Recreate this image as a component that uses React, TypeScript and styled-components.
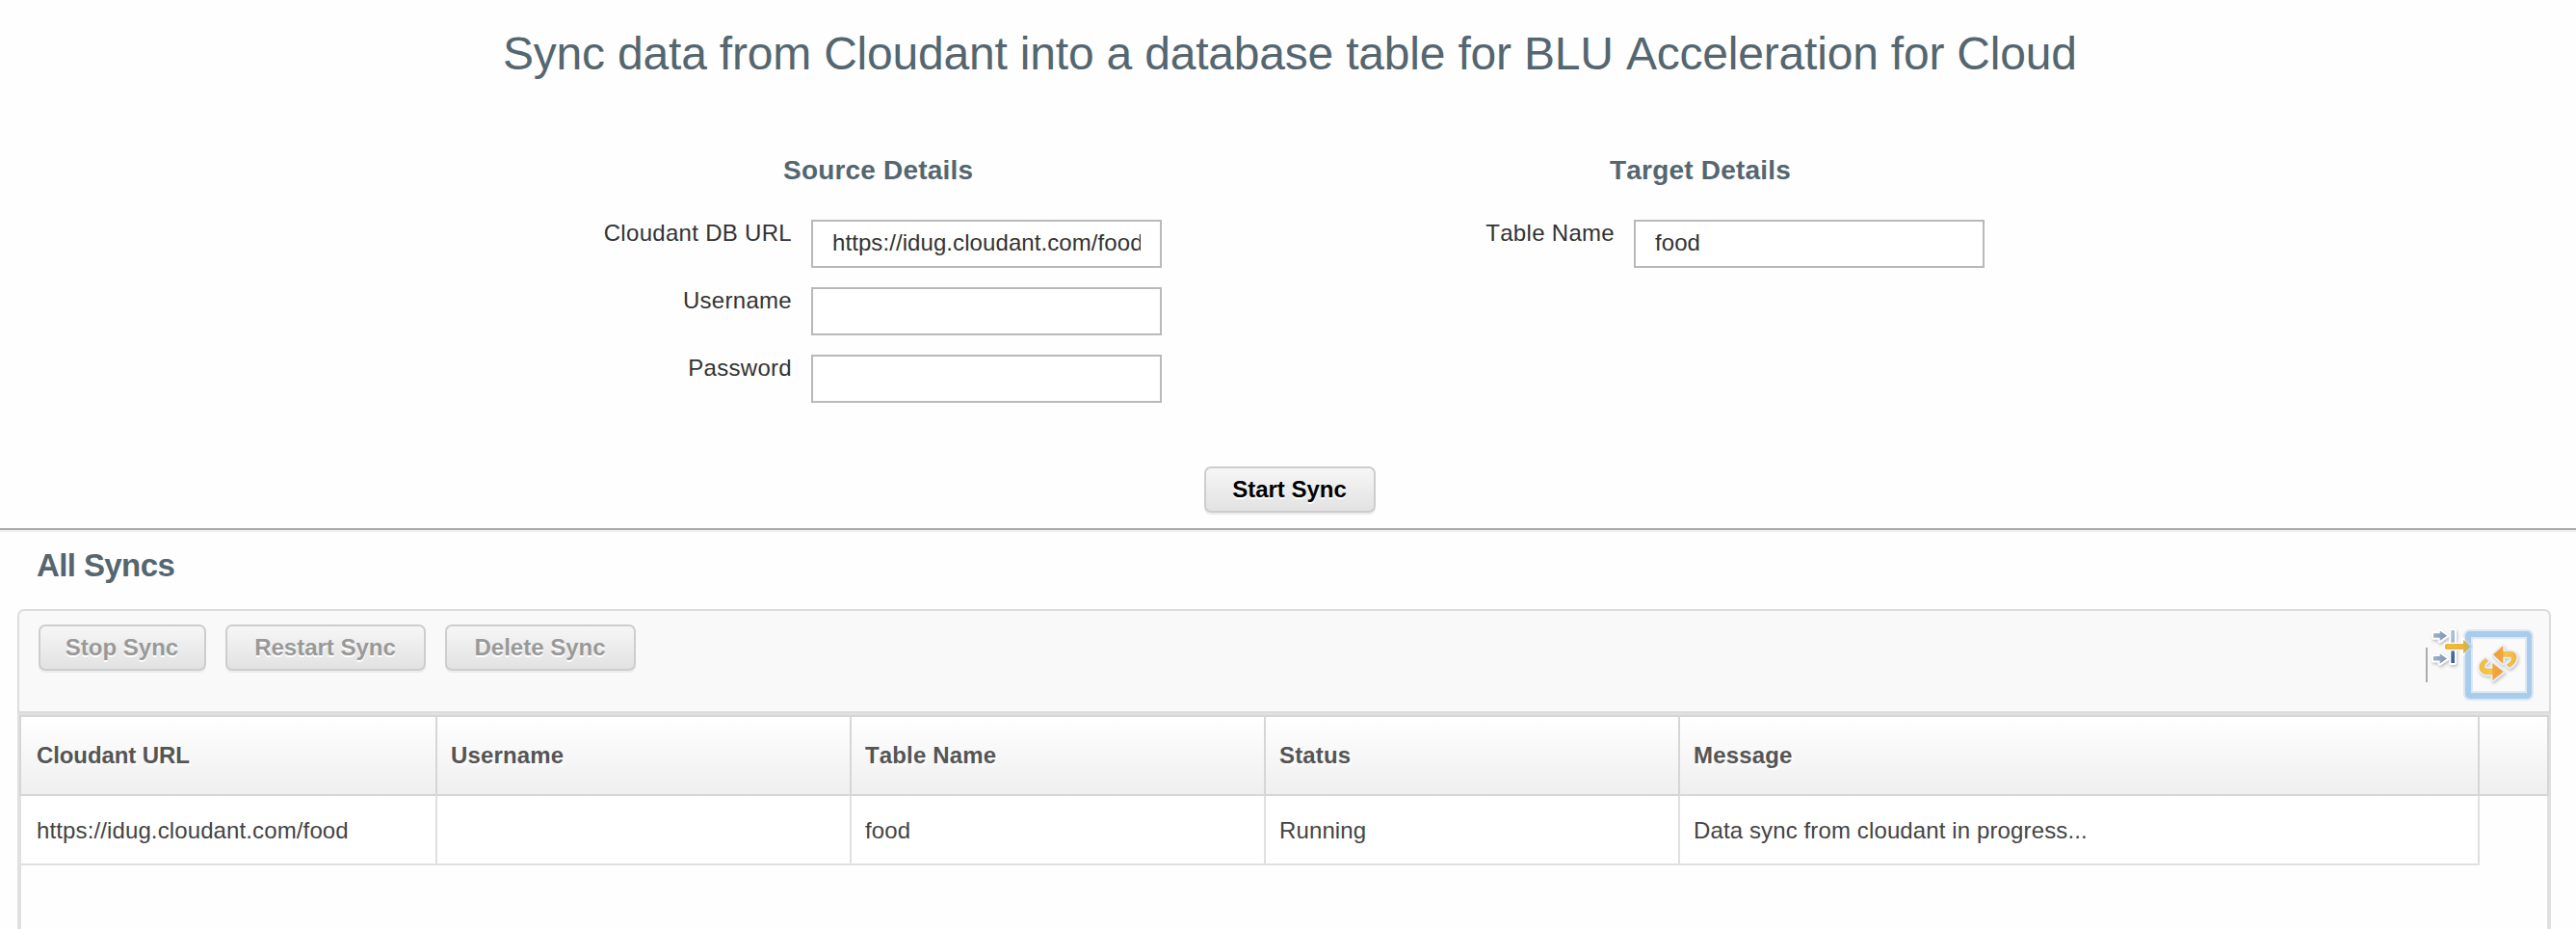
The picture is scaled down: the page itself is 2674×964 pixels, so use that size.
import React from "react";
import styled, { createGlobalStyle, css } from "styled-components";

const Global = createGlobalStyle`
  html, body { margin: 0; background: #fefefe; overflow: hidden; }
  * { box-sizing: border-box; }
  body { font-family: "Liberation Sans", Arial, sans-serif; font-size: 24px; color: #333; font-kerning: none; }
`;

const Page = styled.div`
  width: 2674px;
  height: 964px;
  overflow: hidden;
  display: flex;
  flex-direction: column;
`;

const Setup = styled.section`
  height: 552px;
  flex: none;
  border-bottom: 2px solid #efefef;
  display: flex;
  flex-direction: column;
  box-shadow: inset 0 -2px 0 #ababab;
`;

const Title = styled.h1`
  margin: 28px 0 0 522px;
  font-size: 48px;
  line-height: 56px;
  font-weight: 400;
  letter-spacing: -0.2px;
  color: #54666f;
  white-space: nowrap;
`;

const Forms = styled.div`
  display: flex;
  margin-top: 76px;
  height: 324px;
`;

const Group = styled.div<{ $labelWidth: number }>`
  display: grid;
  grid-template-columns: ${(p) => p.$labelWidth}px 364px;
  grid-template-rows: 68px;
  grid-auto-rows: 70px;
  column-gap: 20px;
  align-content: start;
`;

const GroupTitle = styled.h2<{ $indent: number }>`
  grid-column: 1 / -1;
  margin: 0;
  padding: 1px 0 0 ${(p) => p.$indent}px;
  font-size: 28px;
  line-height: 32px;
  letter-spacing: 0.2px;
  color: #54666f;
  white-space: nowrap;
`;

const Label = styled.label`
  text-align: right;
  line-height: 28px;
  letter-spacing: 0.3px;
  white-space: nowrap;
`;

const Field = styled.input`
  width: 364px;
  height: 50px;
  padding: 0 20px 2px;
  border: 2px solid #b9b9b9;
  background: #fff;
  font: inherit;
  letter-spacing: 0.08px;
  color: inherit;
  outline: none;
`;

const Button = styled.button<{ $width: number; $muted?: boolean }>`
  width: ${(p) => p.$width}px;
  height: 48px;
  flex: none;
  padding: 0 1px 0 0;
  border: 2px solid #cdcdcd;
  border-radius: 7px;
  background: linear-gradient(#f6f6f6, #e2e2e2);
  box-shadow: 0 2px 0 #ebebeb;
  font: bold 24px "Liberation Sans", Arial, sans-serif;
  line-height: 42px;
  white-space: nowrap;
  text-shadow: 0 2px 0 #fff;
  color: ${(p) => (p.$muted ? "#999" : "#000")};
`;

const StartRow = styled.div`
  display: flex;
  padding-left: 1250px;
`;

const ListTitle = styled.h2`
  margin: 16px 0 0 38px;
  font-size: 33px;
  line-height: 38px;
  letter-spacing: -0.6px;
  color: #54666f;
`;

const Panel = styled.section`
  margin: 26px 0 0 18px;
  width: 2630px;
  flex: 1;
  display: flex;
  flex-direction: column;
`;

const Toolbar = styled.div`
  height: 108px;
  flex: none;
  display: flex;
  align-items: flex-start;
  gap: 20px;
  padding: 14px 18px 0 20px;
  border: 2px solid #dcdcdc;
  border-radius: 7px 7px 0 0;
  background: #f9f9f9;
`;

const Tools = styled.div`
  margin-left: auto;
  display: flex;
  align-items: flex-start;
`;

const Divider = styled.div`
  width: 2px;
  height: 36px;
  margin-top: 24px;
  background: #acacac;
`;

const ColumnsIcon = styled.svg`
  display: block;
  position: relative;
  z-index: 1;
  width: 48px;
  height: 48px;
  margin-right: -9px;
`;

const RefreshButton = styled.button`
  display: flex;
  width: 69px;
  height: 70px;
  margin-top: 7px;
  padding: 0;
  border: solid #a9ccec;
  border-width: 6px 5px 6px 6px;
  border-radius: 5px;
  background: #fafafa;
  box-shadow: 0 0 0 2px #dbe7f3, inset 0 0 0 2px #dce9f5;

  svg {
    width: 58px;
    height: 58px;
    display: block;
  }
`;

const TableFrame = styled.div`
  flex: 1;
  border: solid #e0e0e0;
  border-width: 2px 4px 0;
`;

const cell = css`
  display: flex;
  align-items: center;
  border-right: 2px solid;
  padding-left: 14px;
  white-space: nowrap;
  &:first-child { padding-left: 16px; }
`;

const HeadRow = styled.div`
  display: grid;
  grid-template-columns: 432px 430px 430px 430px 830px 70px;
  height: 84px;
  width: 2626px;
  margin: 0 -2px;
  border: 2px solid #d6d6d6;
  background: linear-gradient(#fff, #efefef);
`;

const HeadCell = styled.div`
  ${cell}
  border-color: #d6d6d6;
  font-weight: 700;
  letter-spacing: 0.15px;
  color: #555;
  text-shadow: 2px 2px 2px #fff;
  &:first-child { letter-spacing: -0.1px; }
  &:last-child { border-right: 0; }
`;

const Row = styled.div`
  display: grid;
  grid-template-columns: 432px 430px 430px 430px 830px;
  width: 2552px;
  height: 72px;
  border-bottom: 2px solid #e0e0e0;
  background: #fff;
`;

const Cell = styled.div`
  ${cell}
  padding-top: 1px;
  border-color: #e0e0e0;
  letter-spacing: 0.12px;
  color: #444;
`;

const columns = ["Cloudant URL", "Username", "Table Name", "Status", "Message", ""];
const values = ["https://idug.cloudant.com/food", "", "food", "Running", "Data sync from cloudant in progress..."];

const MapColumns = () => (
  <ColumnsIcon viewBox="0 0 48 48">
    <defs>
      <linearGradient id="steel" x1="0" y1="0" x2="1" y2="0">
        <stop offset="0" stopColor="#9fb3c9" />
        <stop offset="1" stopColor="#7d96b2" />
      </linearGradient>
      <linearGradient id="bar" x1="0" y1="0" x2="0" y2="1">
        <stop offset="0" stopColor="#b3c2d2" />
        <stop offset="0.5" stopColor="#9fb2c7" />
        <stop offset="0.7" stopColor="#486e9f" />
        <stop offset="1" stopColor="#3a6196" />
      </linearGradient>
      <linearGradient id="gold" gradientUnits="userSpaceOnUse" x1="18" y1="0" x2="45" y2="0">
        <stop offset="0" stopColor="#f9c02c" />
        <stop offset="0.65" stopColor="#f4b72e" />
        <stop offset="0.8" stopColor="#d8b23c" />
        <stop offset="1" stopColor="#9fbda6" />
      </linearGradient>
      <linearGradient id="halo" gradientUnits="userSpaceOnUse" x1="18" y1="0" x2="45" y2="0">
        <stop offset="0.74" stopColor="#fff" />
        <stop offset="0.8" stopColor="#b9d6ef" />
      </linearGradient>
    </defs>
    <g style={{ filter: "drop-shadow(1px 2px 1.5px rgba(0,0,0,.22))" }}>
      <g stroke="#fff" strokeWidth="4" strokeLinejoin="round" paintOrder="stroke">
        <path d="M6 9.300h6.700V6.500l7.300 5.300-7.300 5.200v-3.200H6z" fill="url(#steel)" />
        <path d="M6 33h6.700V30.200l7.300 5.300-7.300 5.200v-3.200H6z" fill="url(#steel)" />
        <path d="M24.300 6h3.700v34h-3.700z" fill="url(#bar)" />
      </g>
    </g>
    <path
      d="M18.500 20.700h18.500V15.700l7.500 7.300-7.500 7.300v-5H18.500z"
      fill="url(#gold)"
      stroke="url(#halo)"
      strokeWidth="4"
      strokeLinejoin="round"
      paintOrder="stroke"
    />
    <path d="M37 20.800H18.900v4.400H37" fill="none" stroke="#dc9a1c" strokeWidth="0.9" />
  </ColumnsIcon>
);

const upperArrow =
  "M23.300 18.300 33 9.700v5.600h8c4.600 0 6.300 3 5.900 6.700-.3 3.400-2.800 6.900-7 9.300l-2.700-2.500c3.300-2 5-4 5-6 0-1.700-1-2.500-2.800-2.500H33v7z";
const lowerArrow =
  "M33.300 36 22.700 27.700v5.600H18c-2.800 0-4.200-1-4.200-2.800 0-1.700 1.400-3.500 4-5.500L15 22.500c-4.200 2.700-6 5.600-6 8.700 0 4.200 3 7.300 7.900 7.300h5.800v6z";

const Refresh = () => (
  <svg viewBox="0 0 58 58">
    <defs>
      <linearGradient id="amber" gradientUnits="userSpaceOnUse" x1="23" y1="0" x2="47" y2="0">
        <stop offset="0" stopColor="#f09c3c" />
        <stop offset="0.4" stopColor="#f2a63c" />
        <stop offset="0.5" stopColor="#f8c846" />
        <stop offset="1" stopColor="#f3b53a" />
      </linearGradient>
      <linearGradient id="amberBack" gradientUnits="userSpaceOnUse" x1="33" y1="0" x2="9" y2="0">
        <stop offset="0" stopColor="#f09a3c" />
        <stop offset="0.4" stopColor="#f2a63c" />
        <stop offset="0.5" stopColor="#f8c846" />
        <stop offset="1" stopColor="#f5bd3c" />
      </linearGradient>
    </defs>
    <g
      fill="#e8f1f9"
      stroke="#e8f1f9"
      strokeWidth="4"
      strokeLinejoin="round"
      style={{ filter: "drop-shadow(1px 2px 1.5px rgba(0,0,0,.2))" }}
    >
      <path d={upperArrow} />
      <path d={lowerArrow} />
    </g>
    <g stroke="#eaa53a" strokeWidth="0.6" strokeLinejoin="round">
      <path fill="url(#amber)" d={upperArrow} />
      <path fill="url(#amberBack)" d={lowerArrow} />
    </g>
  </svg>
);

export default function App() {
  return (
    <Page>
      <Global />
      <Setup>
        <Title>Sync data from Cloudant into a database table for BLU Acceleration for Cloud</Title>
        <Forms>
          <Group $labelWidth={822}>
            <GroupTitle $indent={813}>Source Details</GroupTitle>
            <Label>Cloudant DB URL</Label>
            <Field defaultValue="https://idug.cloudant.com/food" />
            <Label>Username</Label>
            <Field />
            <Label>Password</Label>
            <Field type="password" />
          </Group>
          <Group $labelWidth={470}>
            <GroupTitle $indent={465}>Target Details</GroupTitle>
            <Label>Table Name</Label>
            <Field defaultValue="food" />
          </Group>
        </Forms>
        <StartRow>
          <Button $width={178}>Start Sync</Button>
        </StartRow>
      </Setup>
      <ListTitle>All Syncs</ListTitle>
      <Panel>
        <Toolbar>
          <Button $width={174} $muted>Stop Sync</Button>
          <Button $width={208} $muted>Restart Sync</Button>
          <Button $width={198} $muted>Delete Sync</Button>
          <Tools>
            <Divider />
            <MapColumns />
            <RefreshButton aria-label="Refresh">
              <Refresh />
            </RefreshButton>
          </Tools>
        </Toolbar>
        <TableFrame>
          <HeadRow>{columns.map((c, i) => <HeadCell key={i}>{c}</HeadCell>)}</HeadRow>
          <Row>{values.map((v, i) => <Cell key={i}>{v}</Cell>)}</Row>
        </TableFrame>
      </Panel>
    </Page>
  );
}
